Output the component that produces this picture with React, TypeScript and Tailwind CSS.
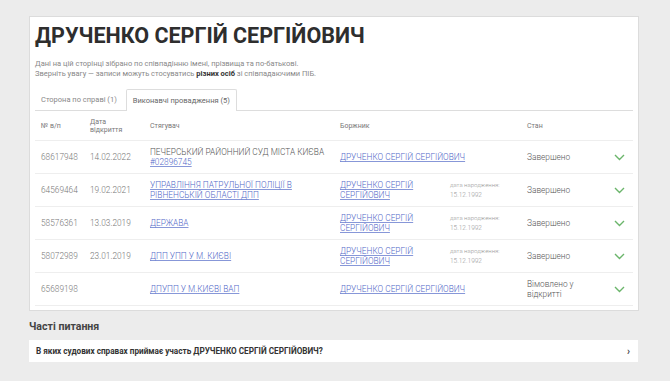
import React from "react";

type Row = {
    id: string;
    date: string;
    creditor: string;
    creditorLink: boolean;
    creditorCode?: string;
    debtorWide: boolean;
    birth?: string;
    status: string;
};

const rows: Row[] = [
    {
        id: "68617948",
        date: "14.02.2022",
        creditor: "ПЕЧЕРСЬКИЙ РАЙОННИЙ СУД МІСТА КИЄВА",
        creditorLink: false,
        creditorCode: "#02896745",
        debtorWide: true,
        status: "Завершено",
    },
    {
        id: "64569464",
        date: "19.02.2021",
        creditor: "УПРАВЛІННЯ ПАТРУЛЬНОЇ ПОЛІЦІЇ В РІВНЕНСЬКІЙ ОБЛАСТІ ДПП",
        creditorLink: true,
        debtorWide: false,
        birth: "15.12.1992",
        status: "Завершено",
    },
    {
        id: "58576361",
        date: "13.03.2019",
        creditor: "ДЕРЖАВА",
        creditorLink: true,
        debtorWide: false,
        birth: "15.12.1992",
        status: "Завершено",
    },
    {
        id: "58072989",
        date: "23.01.2019",
        creditor: "ДПП УПП У М. КИЄВІ",
        creditorLink: true,
        debtorWide: false,
        birth: "15.12.1992",
        status: "Завершено",
    },
    {
        id: "65689198",
        date: "",
        creditor: "ДПУПП У М.КИЄВІ ВАП",
        creditorLink: true,
        debtorWide: true,
        status: "Вімовлено у відкритті",
    },
];

const grid = "grid grid-cols-[49px_60px_190px_110px_77px_79px_33px]";
const link = "text-[#5268c8] underline decoration-[#8797d8]";

function Chevron() {
    return (
        <svg width="11" height="7" viewBox="0 0 11 7" className="ml-[14px]">
            <polyline
                points="1,1 5.5,5.5 10,1"
                fill="none"
                stroke="#6bb56b"
                strokeWidth="1.4"
            />
        </svg>
    );
}

export default function App() {
    return (
        <div className="w-[670px] h-[381px] bg-[#ececec] font-['Roboto',sans-serif] pt-[16px] pl-[29px] overflow-hidden">
            <div className="w-[610px] h-[295px] bg-white border border-[#dcdcdc] pt-[5px] px-[5px]">
                <h1 className="text-[21.5px] leading-[27px] font-bold text-[#2e2e2e]">
                    ДРУЧЕНКО СЕРГІЙ СЕРГІЙОВИЧ
                </h1>
                <p className="mt-[10px] text-[7.5px] leading-[10px] text-[#888]">
                    Дані на цій сторінці зібрано по співпадінню імені, прізвища та по-батькові.
                    <br />
                    Зверніть увагу — записи можуть стосуватись{" "}
                    <b className="text-[#333]">різних осіб</b> зі співпадаючими ПІБ.
                </p>

                <div className="mt-[10px] flex items-end border-b border-[#ddd] text-[7.5px] text-[#888]">
                    <div className="h-[21px] px-[6px] flex items-center">
                        Сторона по справі (1)
                    </div>
                    <div className="ml-[3px] h-[22px] px-[6px] flex items-center border border-b-0 border-[#ddd] rounded-t-[2px] bg-white -mb-px text-[#666]">
                        Виконавчі провадження (5)
                    </div>
                </div>

                <div className={`${grid} h-[29px] items-center text-[7px] leading-[8px] text-[#777]`}>
                    <div className="pl-[6px]">№ в/п</div>
                    <div className="pl-[6px]">
                        Дата
                        <br />
                        відкриття
                    </div>
                    <div className="pl-[6px]">Стягувач</div>
                    <div className="pl-[6px]">Боржник</div>
                    <div />
                    <div className="pl-[6px]">Стан</div>
                    <div />
                </div>

                {rows.map((r) => (
                    <div
                        key={r.id}
                        className={`${grid} h-[33px] items-center border-t border-[#eee] text-[8.3px] leading-[10px] text-[#777] font-light`}
                    >
                        <div className="pl-[6px]">{r.id}</div>
                        <div className="pl-[6px]">{r.date}</div>
                        <div className="pl-[6px] pr-[4px]">
                            {r.creditorLink ? (
                                <span className={link}>{r.creditor}</span>
                            ) : (
                                <>
                                    <div className="text-[#555]">{r.creditor}</div>
                                    <span className={link}>{r.creditorCode}</span>
                                </>
                            )}
                        </div>
                        {r.debtorWide ? (
                            <div className="pl-[6px] col-span-2">
                                <span className={link}>ДРУЧЕНКО СЕРГІЙ СЕРГІЙОВИЧ</span>
                            </div>
                        ) : (
                            <>
                                <div className="pl-[6px] pr-[20px]">
                                    <span className={link}>ДРУЧЕНКО СЕРГІЙ СЕРГІЙОВИЧ</span>
                                </div>
                                <div className="pl-[6px] text-[6px] leading-[10px] text-[#999]">
                                    дата народження:
                                    <br />
                                    <span className="text-[6.5px]">{r.birth}</span>
                                </div>
                            </>
                        )}
                        <div className="pl-[6px] text-[#555] pr-[16px]">{r.status}</div>
                        <div className="flex items-center">
                            <Chevron />
                        </div>
                    </div>
                ))}
                <div className="border-t border-[#eee]" />
            </div>

            <h2 className="mt-[9px] text-[10.6px] leading-[14px] font-bold text-[#444]">
                Часті питання
            </h2>
            <div className="mt-[6px] w-[609px] h-[22px] bg-white flex items-center justify-between pl-[7px] pr-[8px] text-[8.2px] font-bold text-[#333]">
                <span>В яких судових справах приймає участь ДРУЧЕНКО СЕРГІЙ СЕРГІЙОВИЧ?</span>
                <span className="text-[10px] text-[#444]">›</span>
            </div>
        </div>
    );
}
